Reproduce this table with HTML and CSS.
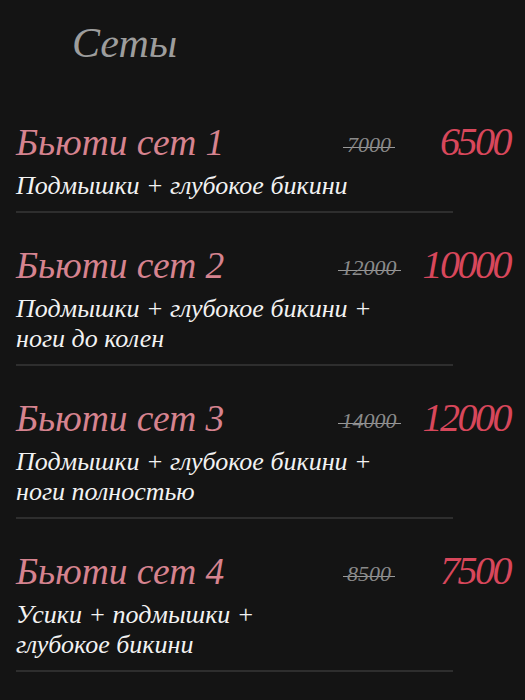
FILE: index.html
```html
<!DOCTYPE html>
<html lang="ru">

<head>
    <meta charset="UTF-8">
    <meta name="viewport" content="width=device-width, initial-scale=1.0">
    <title>Сеты</title>
    <link rel="stylesheet" href="styles.css">
</head>

<body>
    <div class="sets-page">
        <h1 class="sets-title">Сеты</h1>

        <div class="set-card">
            <div class="set-head">
                <h2 class="set-name">Бьюти сет 1</h2>
                <span class="old-price"><s>7000</s></span>
                <span class="new-price">6500</span>
            </div>
            <p class="set-desc">Подмышки + глубокое бикини</p>
            <div class="divider"></div>
        </div>

        <div class="set-card">
            <div class="set-head">
                <h2 class="set-name">Бьюти сет 2</h2>
                <span class="old-price"><s>12000</s></span>
                <span class="new-price">10000</span>
            </div>
            <p class="set-desc">Подмышки + глубокое бикини +<br>ноги до колен</p>
            <div class="divider"></div>
        </div>

        <div class="set-card">
            <div class="set-head">
                <h2 class="set-name">Бьюти сет 3</h2>
                <span class="old-price"><s>14000</s></span>
                <span class="new-price">12000</span>
            </div>
            <p class="set-desc">Подмышки + глубокое бикини +<br>ноги полностью</p>
            <div class="divider"></div>
        </div>

        <div class="set-card">
            <div class="set-head">
                <h2 class="set-name">Бьюти сет 4</h2>
                <span class="old-price"><s>8500</s></span>
                <span class="new-price">7500</span>
            </div>
            <p class="set-desc">Усики + подмышки +<br>глубокое бикини</p>
            <div class="divider"></div>
        </div>
    </div>
</body>

</html>
```

FILE: styles.css
```css
body {
    margin: 0;
    background-color: #141414;
    font-family: "Liberation Serif", "DejaVu Serif", serif;
    font-style: italic;
    overflow: hidden;
}

.sets-page {
    padding: 18px 15px 0 16px;
}

.sets-title {
    margin: 0 0 22px 56px;
    font-size: 42px;
    line-height: 50px;
    font-weight: normal;
    color: #9d9d9d;
}

.set-card {
    padding-top: 30px;
}

.set-head {
    display: flex;
    align-items: baseline;
}

.set-name {
    flex: 1;
    margin: 0;
    font-size: 37.5px;
    line-height: 44px;
    font-weight: normal;
    color: #d6838f;
}

.old-price {
    width: 72px;
    text-align: center;
    font-size: 22px;
    line-height: 24px;
    color: #8a8a8a;
}

/* strike line a bit wider than the digits */
.old-price s {
    display: inline-block;
    padding: 0 4px;
    vertical-align: 3px;
    text-decoration: none;
    background: linear-gradient(#9a9a9a, #9a9a9a) no-repeat 0 62% / 100% 1px;
}

.new-price {
    width: 105px;
    text-align: right;
    font-size: 40px;
    line-height: 44px;
    letter-spacing: -2.5px;
    color: #d8475b;
}

.set-desc {
    margin: 6px 0 0;
    font-size: 26px;
    line-height: 30px;
    color: #f2f2f2;
}

.divider {
    width: 437px;
    height: 2px;
    margin-top: 10px;
    background-color: #2e2e2e;
}
```
